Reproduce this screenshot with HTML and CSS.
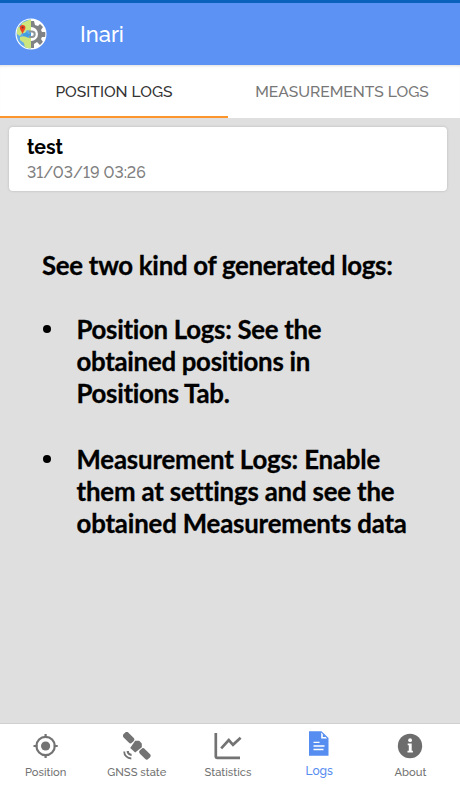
FILE: index.html
```
<!DOCTYPE html>
<html lang="en">
<head>
<meta charset="utf-8">
<title>Inari</title>
<link rel="stylesheet" href="styles.css">
</head>
<body>
<div class="app">
  <header class="bar">
    <svg class="logo" viewBox="0 0 32 32">
      <defs><clipPath id="globe"><circle cx="16" cy="16" r="14.4"/></clipPath></defs>
      <circle cx="16" cy="16" r="15.5" fill="#fff"/>
      <g clip-path="url(#globe)">
        <rect width="16" height="32" fill="#63aae8"/>
        <path d="M7 5L16 1V13L12 12L10 15L7 15L5 18L2 16V10L6 8ZM5 19L10 18L13 20L16 19V31L10 30L9 25L5 22Z" fill="#cce57c"/>
        <path d="M8 16l4-2 1 2 3-1v3l-4 1-4-1z" fill="#449de0"/>
        <path d="M16 3H19L20 7L23 8L25 6L28 9L26 12L27 14H31V19H27L26 21L28 24L25 27L22 24L19 26V30H16Z" fill="#808386"/>
        <path d="M16 9a7 7 0 0 1 0 14z" fill="#fff"/>
        <path d="M14 13.5h3a2.7 2.7 0 0 1 0 5.4h-3" fill="none" stroke="#8e9699" stroke-width="2"/>
      </g>
      <path d="M7.5 16C6.5 13 4.8 11.8 4.8 9.8a2.8 2.8 0 0 1 5.6 0c0 2-1.9 3.2-2.9 6.2z" fill="#f04423"/>
      <circle cx="7.6" cy="9.6" r="1" fill="#79352d"/>
    </svg>
    <h1 class="title">Inari</h1>
  </header>
  <nav class="tabs">
    <div class="tab tab-active">POSITION LOGS</div>
    <div class="tab">MEASUREMENTS LOGS</div>
  </nav>
  <main class="content">
    <article class="card">
      <h2 class="name">test</h2>
      <p class="date">31/03/19 03:26</p>
    </article>
    <section class="note">
      <p class="lead">See two kind of generated logs:</p>
      <ul class="list">
        <li class="item">Position Logs: See the<br>obtained positions in<br>Positions Tab.</li>
        <li class="item item-wide">Measurement Logs: Enable<br>them at settings and see the<br>obtained Measurements data</li>
      </ul>
    </section>
  </main>
  <footer class="bottom">
    <div class="nav">
      <svg class="icon" viewBox="0 0 28 28"><circle cx="13.6" cy="14" r="9.2" fill="none" stroke="#737373" stroke-width="2.2"/><circle cx="13.6" cy="14" r="4.6" fill="#737373"/><path d="M13.6 2v4M13.6 22v4M1.5 14h4M21.7 14h4" stroke="#737373" stroke-width="2.2"/></svg>
      <span class="label">Position</span>
    </div>
    <div class="nav">
      <svg class="icon" viewBox="0 0 28 28"><g fill="#737373"><rect x="-6" y="-3.4" width="12" height="6.8" rx="2.4" transform="translate(5.6 5.6) rotate(45)"/><rect x="-6" y="-3.4" width="12" height="6.8" rx="2.4" transform="translate(21.9 21.9) rotate(45)"/><path d="M7.2 16l5-7.2h4l2.6 2.8v3.6L12.2 20.5z"/><path d="M3.6 19a5 5 0 0 0 5 5v-2.3a2.7 2.7 0 0 1-2.7-2.7z"/></g><path d="M1.2 19.4a7 7 0 0 0 7.1 7.1" fill="none" stroke="#737373" stroke-width="1.8"/></svg>
      <span class="label">GNSS state</span>
    </div>
    <div class="nav">
      <svg class="icon" viewBox="0 0 28 28"><path d="M1.8 1v23.3q0 1.5 1.5 1.5H26M7.2 16.4l7.6-8.3 4.2 4.7 7.6-7" fill="none" stroke="#737373" stroke-width="2.7"/></svg>
      <span class="label">Statistics</span>
    </div>
    <div class="nav nav-active">
      <svg class="icon icon-logs" viewBox="0 0 28 28"><path d="M4 1.2h12.5L23.5 8v17.7H4z" fill="#568df0"/><path d="M16.2 2.4v6.1h6" fill="#fff"/><path d="M17.8 3.5V7h3.4z" fill="#568df0"/><path d="M8.5 12.4h6M8.5 16h11M8.5 19.5h10" stroke="#fff" stroke-width="1.3"/></svg>
      <span class="label">Logs</span>
    </div>
    <div class="nav">
      <svg class="icon" viewBox="0 0 28 28"><circle cx="14" cy="14" r="12.2" fill="#6d6d6d"/><circle cx="14.1" cy="8.2" r="1.9" fill="#fff"/><path d="M11.7 11.4h4v7.4h1.2v1.8h-5.4v-1.8h1.3v-5.6h-1.1z" fill="#fff"/></svg>
      <span class="label">About</span>
    </div>
  </footer>
</div>
</body>
</html>
```
FILE: styles.css
```
* { box-sizing: border-box; }
body { margin: 0; background: #fff; font-family: Raleway, Lato, sans-serif; font-variant-numeric: lining-nums; }
h1, h2, p, ul { margin: 0; padding: 0; }
.app { height: 786px; display: flex; flex-direction: column; overflow: hidden; }
.bar { height: 65px; flex: none; background: #5b92f4; border-top: 3px solid #0b62bd; display: flex; align-items: center; padding: 0 0 1px 15px; }
.logo { width: 32px; height: 32px; margin-top: 1px; }
.title { font-size: 22px; font-weight: 500; color: #fff; margin-left: 33px; line-height: 30px; }
.tabs { height: 53px; flex: none; display: flex; padding-right: 4px; background: #fff; box-shadow: inset 0 3px 3px -2px #ddd; }
.tab { flex: 1; display: flex; align-items: center; justify-content: center; font-size: 15.6px; font-weight: 500; color: #777; white-space: nowrap; }
.tab-active { color: #333; border-bottom: 2px solid #fc962c; padding-top: 2px; }
.content { flex: 1; background: #dfdfdf; padding: 9px 13px 0 9px; }
.card { height: 64px; background: #fff; border-radius: 4px; box-shadow: 0 0 2px 1px #ccc; padding: 8px 18px; }
.name { font-size: 19.5px; line-height: 25px; font-weight: 700; color: #000; }
.date { font-size: 15.8px; line-height: 25px; font-weight: 500; color: #808080; }
.note { padding: 58px 0 0 33px; font-family: Lato, sans-serif; font-weight: 700; font-size: 25.8px; line-height: 32px; letter-spacing: -0.28px; font-variant-ligatures: none; -webkit-text-stroke: 0.3px #000; color: #000; white-space: nowrap; }
.list { list-style: none; padding-top: 32px; }
.item { position: relative; padding-left: 34.5px; margin-bottom: 34px; }
.item-wide { letter-spacing: -0.17px; }
.item::before { content: ""; position: absolute; left: 1px; top: 12px; width: 8px; height: 8px; border-radius: 50%; background: #000; }
.bottom { height: 63px; flex: none; background: #fff; border-top: 1px solid #d0d0d0; display: flex; padding-right: 4px; }
.nav { flex: 1; display: flex; flex-direction: column; align-items: center; padding-top: 8px; color: #737373; }
.nav-active { color: #568df0; }
.icon { width: 28px; height: 28px; }
.icon-logs { margin-top: -2px; }
.label { font-size: 11.2px; font-weight: 500; line-height: 16px; margin-top: 4px; white-space: nowrap; }
.nav-active .label { font-size: 12px; margin-top: 5px; }
```
